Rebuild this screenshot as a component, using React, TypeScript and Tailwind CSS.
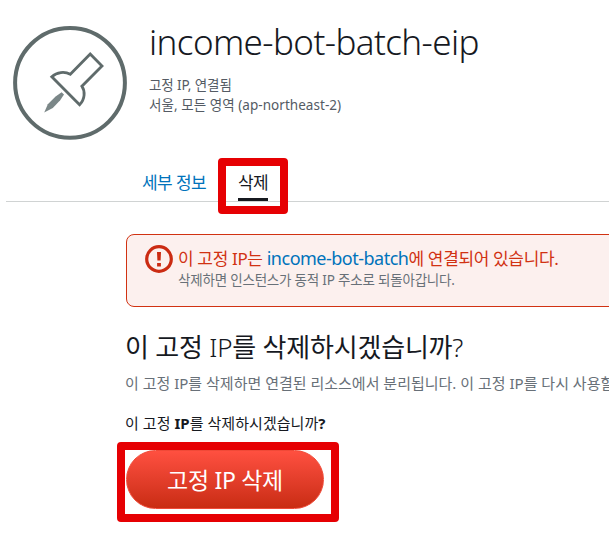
function PinIcon() {
  return (
    <svg className="h-[116px] w-[116px] shrink-0" viewBox="12 25 116 116" fill="none">
      <circle cx="70" cy="82.8" r="54.9" stroke="#5f6b6b" strokeWidth="4" />
      <path
        d="M90.2 54 102 65.9 81.9 86.2C85.2 91 85.2 99.3 79.6 104.8L51.8 76.7C57 72 64.5 71.2 70.3 74.2Z"
        stroke="#5f6b6b"
        strokeWidth="2.8"
      />
      <path d="M61.6 92.2 64 94.6 60.2 100.3 52.8 108 44.2 112.4 47.8 104.3 55.6 96.6Z" fill="#7b8788" />
    </svg>
  );
}

function WarningIcon() {
  return (
    <svg className="mt-[10px] h-7 w-7 shrink-0" viewBox="0 0 28 28" fill="none">
      <circle cx="14" cy="14" r="12.3" stroke="#cb2b12" strokeWidth="3.2" />
      <path d="M12 7h4l-.4 8.6h-3.2ZM12.1 18h3.8v3.4h-3.8Z" fill="#cb2b12" />
    </svg>
  );
}

export default function App() {
  return (
    <div className="relative h-[543px] w-[609px] overflow-hidden bg-white font-['Noto_Sans','Noto_Sans_CJK_KR',sans-serif] whitespace-nowrap text-[#16191f]">
      <header className="flex h-[150px] pt-[25px] pl-3">
        <PinIcon />
        <div className="pl-[21px]">
          <h1 className="-mt-2 h-[50px] text-[35px] leading-[50px] font-light tracking-[-0.6px]">income-bot-batch-eip</h1>
          <p className="mt-2 text-[13.5px] leading-5 tracking-[-0.1px] text-[#545b64]">고정 IP, 연결됨</p>
          <p className="text-[13.5px] leading-5 tracking-[0.05px] text-[#545b64]">서울, 모든 영역 (ap-northeast-2)</p>
        </div>
      </header>

      <nav className="ml-[6px] flex h-[52px] items-end border-b border-[#d0d3d3] pl-[136px] text-[17px]">
        <a className="h-[34px] w-24 pt-[2px] leading-[28px] tracking-[-0.6px] text-[#0073bb]">세부 정보</a>
        <a className="h-[34px] w-[30px] border-b-3 border-[#16191f] pt-[2px] leading-[28px] tracking-[-0.6px]">삭제</a>
      </nav>

      <main className="pl-[126px]">
        <section className="mt-8 -mr-3 flex h-[73px] rounded-lg border border-[#d13212] bg-[#fcf0ee] pl-[18px]">
          <WarningIcon />
          <div className="pt-[11px] pl-[5px]">
            <p className="text-[17px] leading-6 tracking-[-0.35px] text-[#d13212]">
              이 고정 IP는 <a className="text-[18px] tracking-[-0.5px] text-[#0073bb]">income-bot-batch</a>에 연결되어 있습니다.
            </p>
            <p className="-mt-px text-[13.5px] leading-5 tracking-[-0.2px] text-[#687078]">삭제하면 인스턴스가 동적 IP 주소로 되돌아갑니다.</p>
          </div>
        </section>
        <h2 className="mt-[22px] -ml-px h-9 text-[26px] leading-9 tracking-[-0.2px]">
          이 고정 <span className="font-light">IP</span>를 삭제하시겠습니까<span className="font-light">?</span>
        </h2>
        <p className="mt-[6px] -ml-px h-6 text-[15px] leading-6 text-[#687078]">
          이 고정 IP를 삭제하면 연결된 리소스에서 분리됩니다. 이 고정 IP를 다시 사용할
        </p>
        <p className="mt-4 -ml-px h-6 text-[15px] leading-6 tracking-[0.05px]">
          이 고정 <b>IP</b>를 삭제하시겠습니까<b>?</b>
        </p>
        <button className="mt-[15px] block h-[59px] w-[198px] rounded-full border border-[#f04a38] bg-linear-to-b from-[#ff5040] to-[#c92c12] text-[23px] leading-[58px] tracking-[-0.3px] text-white">
          고정 IP 삭제
        </button>
      </main>

      <div className="absolute top-[158px] left-[218px] h-[56px] w-[70px] rounded border-8 border-[#e60003]" />
      <div className="absolute top-[442px] left-[117px] h-[80px] w-[222px] rounded border-8 border-[#e60003]" />
    </div>
  );
}
